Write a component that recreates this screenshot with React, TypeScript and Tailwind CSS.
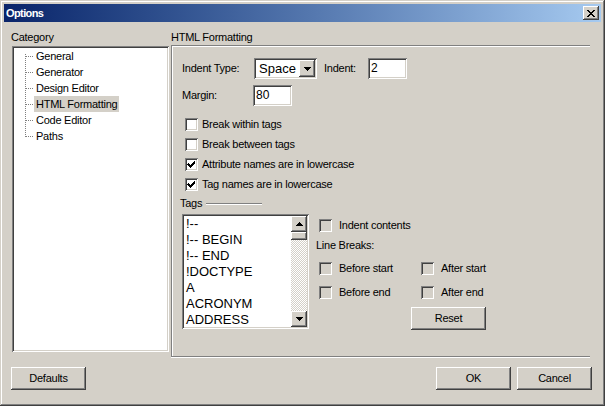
import React from 'react'

const RAISED = 'bg-[#d4d0c8] shadow-[inset_-1px_-1px_#404040,inset_1px_1px_#fff,inset_-2px_-2px_#808080]'
const SUNKEN = 'shadow-[inset_1px_1px_#808080,inset_-1px_-1px_#fff,inset_2px_2px_#404040,inset_-2px_-2px_#d4d0c8]'

const CATEGORIES = ['General', 'Generator', 'Design Editor', 'HTML Formatting', 'Code Editor', 'Paths']
const TAGS = ['!--', '!-- BEGIN', '!-- END', '!DOCTYPE', 'A', 'ACRONYM', 'ADDRESS']

function CheckBox({ checked = false, disabled = false }: { checked?: boolean; disabled?: boolean }) {
  return (
    <span className={`block w-[13px] h-[13px] shrink-0 ${disabled ? 'bg-[#d4d0c8]' : 'bg-white'} ${SUNKEN}`}>
      {checked && (
        <svg width="13" height="13" viewBox="0 0 13 13" shapeRendering="crispEdges">
          <path d="M3 5h1v1h1v1h1v-1h1v-1h1v-1h1v-1h1v3h-1v1h-1v1h-1v1h-1v1h-1v-1h-1v-1h-1v-1h-1z" fill="#000" />
        </svg>
      )}
    </span>
  )
}

function CheckRow({ label, checked, disabled, gap = 'gap-[4px]' }: { label: string; checked?: boolean; disabled?: boolean; gap?: string }) {
  return (
    <div className={`flex items-center h-[13px] ${gap}`}>
      <CheckBox checked={checked} disabled={disabled} />
      <span className="leading-[13px] whitespace-nowrap">{label}</span>
    </div>
  )
}

function Button({ label, className = '' }: { label: string; className?: string }) {
  return (
    <button className={`w-[75px] h-[23px] flex items-center justify-center ${RAISED} ${className}`}>
      {label}
    </button>
  )
}

function Arrow({ up }: { up?: boolean }) {
  return (
    <svg width="7" height="4" viewBox="0 0 7 4" shapeRendering="crispEdges">
      {up ? <path d="M3 0h1v1h1v1h1v1h1v1h-7v-1h1v-1h1v-1h1z" fill="#000" /> : <path d="M0 0h7v1h-1v1h-1v1h-1v1h-1v-1h-1v-1h-1v-1h-1z" fill="#000" />}
    </svg>
  )
}

function TreeRow({ label, index, selected }: { label: string; index: number; selected?: boolean }) {
  const last = index === CATEGORIES.length - 1
  return (
    <div className="flex items-center h-[16px] pl-[11px]">
      <svg width="9" height="16" viewBox="0 0 9 16" shapeRendering="crispEdges" className="shrink-0">
        <line x1="0.5" y1={index === 0 ? 6 : 0} x2="0.5" y2={last ? 9 : 16} stroke="#808080" strokeDasharray="1 1" />
        <line x1="1" y1="8.5" x2="8" y2="8.5" stroke="#808080" strokeDasharray="1 1" />
      </svg>
      <span className={`px-[2px] h-[16px] leading-[16px] whitespace-nowrap ${selected ? 'bg-[#d4d0c8]' : ''}`}>{label}</span>
    </div>
  )
}

export default function App() {
  return (
    <div className="w-[605px] h-[406px] flex flex-col bg-[#d4d0c8] text-black text-[11px] leading-[13px] tracking-[-0.25px] font-['Liberation_Sans',Arial,sans-serif] shadow-[inset_-1px_-1px_#404040,inset_1px_1px_#d4d0c8,inset_-2px_-2px_#808080,inset_2px_2px_#fff]">
      {/* title bar */}
      <div className="mx-[4px] mt-[4px] h-[18px] flex items-center pl-[2px] bg-linear-to-r from-[#0a246a] to-[#a6caf0]">
        <span className="text-white font-bold text-[11px] tracking-[-0.6px]">Options</span>
        <div className={`ml-auto mr-[2px] w-[16px] h-[14px] flex items-center justify-center ${RAISED}`}>
          <svg width="8" height="7" viewBox="0 0 8 7" shapeRendering="crispEdges">
            <path d="M0 0h2v1h1v1h2v-1h1v-1h2v1h-1v1h-1v1h-1v1h1v1h1v1h1v1h-2v-1h-1v-1h-2v1h-1v1h-2v-1h1v-1h1v-1h1v-1h-1v-1h-1v-1h-1z" fill="#000" />
          </svg>
        </div>
      </div>

      {/* body */}
      <div className="flex pt-[8px]">
        <div className="ml-[11px] w-[158px] flex flex-col">
          <div className="h-[14px] leading-[14px]">Category</div>
          <div className={`mt-[2px] ml-[1px] w-[157px] h-[306px] bg-white p-[2px] ${SUNKEN}`}>
            {CATEGORIES.map((c, i) => (
              <TreeRow key={c} label={c} index={i} selected={c === 'HTML Formatting'} />
            ))}
          </div>
        </div>

        <div className="ml-[2px] w-[419px] flex flex-col">
          <div className="h-[14px] leading-[14px]">HTML Formatting</div>
          <div className="mt-[1px] h-[312px] border-t border-l border-b border-[#808080] shadow-[inset_1px_1px_#fff,0_1px_#fff] pl-[10px] pt-[12px]">
            <div className="flex items-center h-[21px]">
              <span className="w-[72px]">Indent Type:</span>
              <div className={`w-[63px] h-[21px] p-[2px] flex bg-white ${SUNKEN}`}>
                <span className="flex-1 pl-[3px] text-[13px] leading-[17px] tracking-normal">Space</span>
                <div className={`w-[16px] h-[17px] flex items-center justify-center ${RAISED}`}>
                  <Arrow />
                </div>
              </div>
              <span className="ml-[7px] w-[44px]">Indent:</span>
              <div className={`w-[39px] h-[21px] bg-white pl-[3px] text-[12px] leading-[21px] tracking-normal ${SUNKEN}`}>2</div>
            </div>
            <div className="mt-[6px] flex items-center h-[21px]">
              <span className="w-[71px]">Margin:</span>
              <div className={`w-[39px] h-[21px] bg-white pl-[3px] text-[12px] leading-[21px] tracking-normal ${SUNKEN}`}>80</div>
            </div>

            <div className="mt-[12px] pl-[3px] flex flex-col gap-[7px]">
              <CheckRow label="Break within tags" />
              <CheckRow label="Break between tags" />
              <CheckRow label="Attribute names are in lowercase" checked />
              <CheckRow label="Tag names are in lowercase" checked />
            </div>

            <div className="mt-[6px] -ml-[2px] flex items-center h-[13px]">
              <span>Tags</span>
              <span className="ml-[4px] w-[56px] h-[2px] border-t border-[#808080] bg-white" />
            </div>

            <div className="mt-[4px] flex">
              <div className={`w-[127px] h-[115px] p-[2px] flex bg-white ${SUNKEN}`}>
                <div className="flex-1 pl-[2px] text-[13px] leading-[16px] tracking-normal overflow-hidden">
                  {TAGS.map((t) => (
                    <div key={t} className="whitespace-nowrap">{t}</div>
                  ))}
                </div>
                <div className="w-[16px] flex flex-col">
                  <div className={`h-[16px] flex items-center justify-center ${RAISED}`}>
                    <Arrow up />
                  </div>
                  <div className={`h-[8px] ${RAISED}`} />
                  <div className="flex-1 bg-[repeating-conic-gradient(#fff_0_25%,#d4d0c8_0_50%)] bg-[length:2px_2px]" />
                  <div className={`h-[16px] flex items-center justify-center ${RAISED}`}>
                    <Arrow />
                  </div>
                </div>
              </div>

              <div className="ml-[7px] flex flex-col">
                <div className="mt-[5px] pl-[3px]">
                  <CheckRow label="Indent contents" disabled gap="gap-[7px]" />
                </div>
                <div className="mt-[7px] h-[13px]">Line Breaks:</div>
                <div className="mt-[10px] pl-[3px] flex flex-col gap-[11px]">
                  <div className="flex">
                    <div className="w-[102px]"><CheckRow label="Before start" disabled gap="gap-[7px]" /></div>
                    <CheckRow label="After start" disabled gap="gap-[7px]" />
                  </div>
                  <div className="flex">
                    <div className="w-[102px]"><CheckRow label="Before end" disabled gap="gap-[7px]" /></div>
                    <CheckRow label="After end" disabled gap="gap-[7px]" />
                  </div>
                </div>
                <Button label="Reset" className="mt-[8px] ml-[95px]" />
              </div>
            </div>
          </div>
        </div>
      </div>

      {/* footer */}
      <div className="mt-[10px] flex">
        <Button label="Defaults" className="ml-[11px]" />
        <Button label="OK" className="ml-auto" />
        <Button label="Cancel" className="ml-[6px] mr-[13px]" />
      </div>
    </div>
  )
}
